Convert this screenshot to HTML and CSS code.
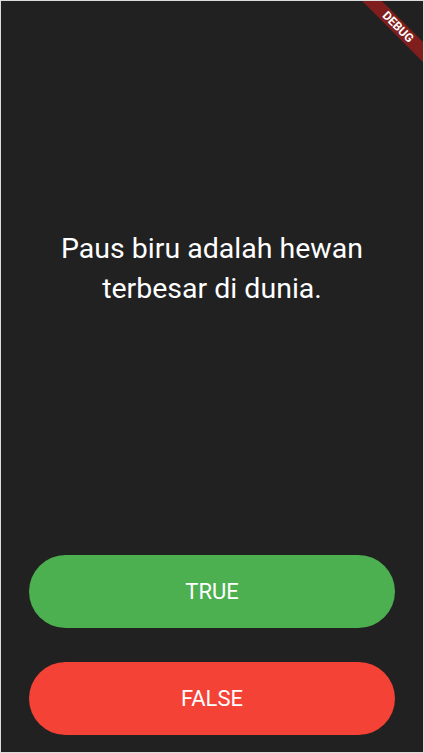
FILE: index.html
```html
<!DOCTYPE html>
<html>
<head>
<meta charset="utf-8">
<link rel="stylesheet" href="styles.css">
</head>
<body>
<div class="screen">
  <div class="question">
    <p class="question-text">Paus biru adalah hewan terbesar di dunia.</p>
  </div>
  <div class="answers">
    <button class="btn btn-true">TRUE</button>
    <button class="btn btn-false">FALSE</button>
  </div>
  <div class="banner"><span>DEBUG</span></div>
</div>
</body>
</html>
```
FILE: styles.css
```css
html, body {
  margin: 0;
  padding: 0;
  background: #dcdcdc;
}
.screen {
  position: relative;
  box-sizing: border-box;
  width: 424px;
  height: 753px;
  border: 1px solid #dcdcdc;
  background: #212121;
  display: flex;
  flex-direction: column;
  overflow: hidden;
  font-family: Roboto, "Liberation Sans", sans-serif;
}
.question {
  flex: 1;
  display: flex;
  align-items: center;
  justify-content: center;
  padding: 0 30px 19px 30px;
}
.question-text {
  margin: 0;
  color: #ffffff;
  font-size: 28.5px;
  line-height: 40px;
  text-align: center;
}
.answers {
  display: flex;
  flex-direction: column;
  gap: 34px;
  padding: 0 28px 17px 28px;
}
.btn {
  height: 73px;
  border: none;
  border-radius: 37px;
  color: #ffffff;
  font-family: Roboto, "Liberation Sans", sans-serif;
  font-size: 22px;
  padding: 0;
}
.btn-true { background: #4caf50; }
.btn-false { background: #f44336; }
.banner {
  position: absolute;
  left: 351px;
  top: 19px;
  width: 92px;
  height: 14px;
  background: rgba(183, 28, 28, 0.63);
  transform: rotate(45deg);
  display: flex;
  align-items: center;
  justify-content: center;
}
.banner span {
  color: #ffffff;
  font-size: 12px;
  font-weight: 700;
  line-height: 14px;
}
```
